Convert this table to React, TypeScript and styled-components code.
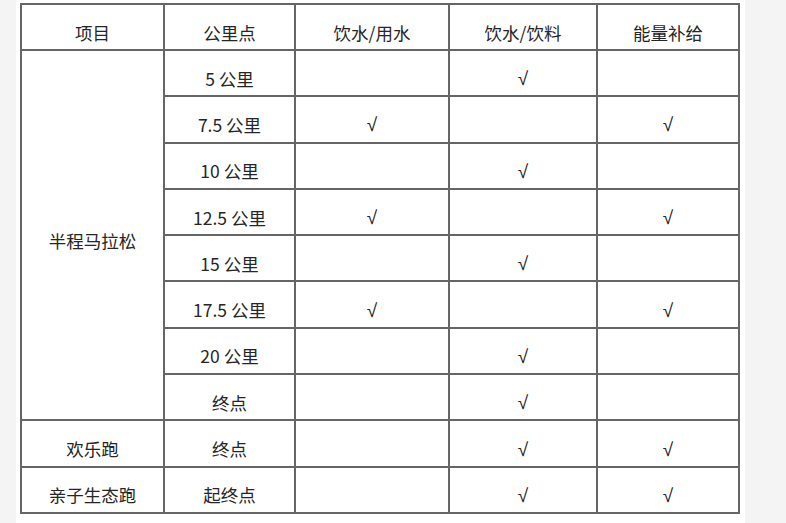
import React from "react";
import styled, { createGlobalStyle } from "styled-components";

const Global = createGlobalStyle`
  html, body { margin: 0; padding: 0; background: #f4f4f4; }
  body { font-family: "Noto Sans CJK SC", "Noto Sans", sans-serif; }
`;

const Page = styled.div`
  width: 786px;
  height: 523px;
  overflow: hidden;
  display: flex;
`;

const Sheet = styled.div`
  margin-left: 16px;
  width: 729px;
  background: #fff;
  padding: 3px 0 0 4px;
  box-sizing: border-box;
`;

const Table = styled.table`
  border-collapse: collapse;
  table-layout: fixed;
  width: 720px;
  color: #262626;
  font-size: 17.5px;
`;

const Cell = styled.td<{ $dark?: boolean }>`
  border: 2px solid #666;
  ${(p) => (p.$dark ? "border-left-color: #111;" : "")}
  text-align: center;
  vertical-align: middle;
  padding: 11px 0 0;
  height: 33.3px;
  line-height: 22px;
  white-space: nowrap;
`;

const HeadCell = styled(Cell).attrs({ as: "th" })`
  font-weight: normal;
  height: 33px;
`;

const Check = styled.span`
  font-family: "Liberation Sans", "DejaVu Sans", sans-serif;
  font-size: 19px;
  color: #222;
`;

const Note = styled.div`
  margin-top: 6px;
  padding-left: 16px;
  font-size: 14px;
  color: #bbb;
  letter-spacing: 1px;
`;

const cols = [143, 131, 154, 148, 142];

type Row = { group?: string; span?: number; point: string; a: boolean; b: boolean; c: boolean };

const rows: Row[] = [
  { group: "半程马拉松", span: 8, point: "5 公里", a: false, b: true, c: false },
  { point: "7.5 公里", a: true, b: false, c: true },
  { point: "10 公里", a: false, b: true, c: false },
  { point: "12.5 公里", a: true, b: false, c: true },
  { point: "15 公里", a: false, b: true, c: false },
  { point: "17.5 公里", a: true, b: false, c: true },
  { point: "20 公里", a: false, b: true, c: false },
  { point: "终点", a: false, b: true, c: false },
  { group: "欢乐跑", span: 1, point: "终点", a: false, b: true, c: true },
  { group: "亲子生态跑", span: 1, point: "起终点", a: false, b: true, c: true },
];

const mark = (v: boolean) => (v ? <Check>√</Check> : null);

export default function App() {
  return (
    <Page>
      <Global />
      <Sheet>
        <Table>
          <colgroup>
            {cols.map((w, i) => (
              <col key={i} style={{ width: w }} />
            ))}
          </colgroup>
          <thead>
            <tr>
              <HeadCell>项目</HeadCell>
              <HeadCell>公里点</HeadCell>
              <HeadCell $dark>饮水/用水</HeadCell>
              <HeadCell>饮水/饮料</HeadCell>
              <HeadCell>能量补给</HeadCell>
            </tr>
          </thead>
          <tbody>
            {rows.map((r, i) => (
              <tr key={i}>
                {r.group && <Cell rowSpan={r.span}>{r.group}</Cell>}
                <Cell>{r.point}</Cell>
                <Cell $dark>{mark(r.a)}</Cell>
                <Cell>{mark(r.b)}</Cell>
                <Cell>{mark(r.c)}</Cell>
              </tr>
            ))}
          </tbody>
        </Table>
        <Note>备注：以上补给站设置仅供参考</Note>
      </Sheet>
    </Page>
  );
}
